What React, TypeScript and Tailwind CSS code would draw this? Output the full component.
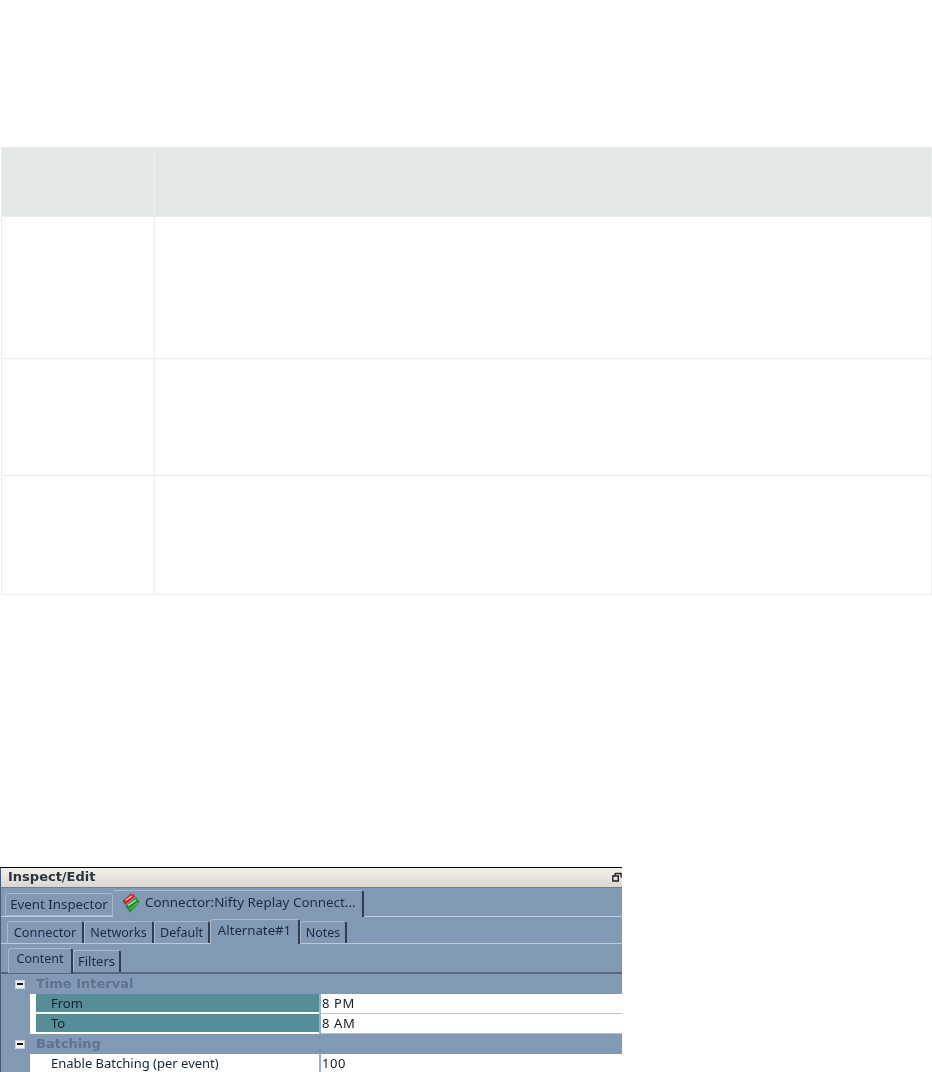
import React from "react";

const font = "font-['Noto_Sans',sans-serif]";

function Tab({ label, active, w, h, size, plain }: { label: string; active?: boolean; w: string; h: string; size: string; plain?: boolean }) {
  return (
    <div
      className={`${w} ${h} ${size} flex items-center justify-center text-[#1c2b44] rounded-t-[3px] border-l border-t border-[#a9b9cd] bg-[#8299b6] ${
        plain ? "border-r border-b" : "border-r-2 border-r-[#2f3e55]"
      } ${active ? "pb-[3px] relative -mb-px" : "pt-px"}`}
    >
      {label}
    </div>
  );
}

function Row({ label, value, sel }: { label: string; value: string; sel?: boolean }) {
  return (
    <div className="flex h-[20px] ml-[30px] bg-white">
      <div className="w-[6px]" />
      <div className="w-[283px]">
        <div className={`h-[18px] pl-[15px] text-[13px] leading-[18px] text-[#14242e] ${sel ? "bg-[#568e98]" : "bg-white"}`}>{label}</div>
      </div>
      <div className="w-[2px] bg-[#9fb0c4]" />
      <div className="flex-1 border-b border-[#b4c2d2] pl-px text-[13px] leading-[18px] text-[#1a1a1a] tracking-[0.6px]">{value}</div>
    </div>
  );
}

function Group({ label }: { label: string }) {
  return (
    <div className="flex items-center h-[20px] pl-[15px]">
      <div className="w-[10px] h-[9px] bg-[#eef1f5] border border-[#c8d2de] flex items-center justify-center">
        <div className="w-[6px] h-[2px] bg-[#111]" />
      </div>
      <span className="ml-[11px] font-['DejaVu_Sans',sans-serif] font-bold text-[13px] text-[#5f7391]">{label}</span>
    </div>
  );
}

export default function App() {
  return (
    <div className={`w-[932px] h-[1072px] overflow-hidden bg-white ${font}`}>
      <div className="pt-[147px] pl-px">
        <div className="w-[931px] border border-[#ebecec] grid grid-cols-[153px_1fr] grid-rows-[69px_142px_117px_118px]">
          <div className="bg-[#e3e7e7] border-r border-r-[#eef0f0] border-b border-b-[#ebecec]" />
          <div className="bg-[#e3e7e7] border-b border-b-[#ebecec]" />
          <div className="border-r border-[#ebecec] border-b" />
          <div className="border-b border-[#ebecec]" />
          <div className="border-r border-[#ebecec] border-b" />
          <div className="border-b border-[#ebecec]" />
          <div className="border-r border-[#ebecec]" />
          <div />
        </div>
      </div>

      <div className="mt-[272px] w-[622px] h-[205px] overflow-hidden border-t border-black border-l border-l-[#4a5a70] bg-[#8299b6] blur-[0.3px]">
        <div className="h-[20px] bg-gradient-to-b from-[#f3f0ec] to-[#dcd6cf] flex items-center justify-between pl-[7px] pb-[2px] border-b border-[#6d7f96]">
          <span className="font-['DejaVu_Sans',sans-serif] font-bold text-[13px] text-[#2c3444]">Inspect/Edit</span>
          <svg width="10" height="10" viewBox="0 0 10 10">
            <path d="M3 1.5h6v4M3 1.5v2M0.8 4h5.5v5H0.8z" fill="none" stroke="#222" strokeWidth="1.4" />
          </svg>
        </div>

        <div className="h-[29px] flex items-end pl-[4px] border-b border-[#bccbdc]">
          <Tab label="Event Inspector" w="w-[108px]" h="h-[23px]" size="text-[13.3px]" plain />
          <div className="w-[251px] h-[27px] relative -mb-px bg-[#8299b6] flex items-center pl-[9px] pb-[3px] text-[13.4px] text-[#1c2b44] border-t border-[#a9b9cd] border-r-2 border-r-[#2f3e55] rounded-t-[3px]">
            <svg width="18" height="20" viewBox="0 0 18 20" className="mr-[5px] shrink-0">
              <path d="M9 0.5 L13.5 3 L3 12 L0.5 8 Z" fill="#d42028" />
              <path d="M3.5 7.5 L10 2.8" stroke="#f5c9c0" strokeWidth="1.2" fill="none" />
              <path d="M14 4 L17.5 9 L8 19.5 L3 13 Z" fill="#1f9428" />
              <path d="M6 12.5 L14 7" stroke="#c4e8b0" strokeWidth="1.4" fill="none" />
              <path d="M8 16 L15.5 10" stroke="#7cc772" strokeWidth="1" fill="none" />
            </svg>
            Connector:Nifty Replay Connect...
          </div>
        </div>

        <div className="h-[27px] flex items-end pl-[6px] border-b border-[#bccbdc]">
          <Tab label="Connector" w="w-[77px]" h="h-[22px]" size="text-[12.8px]" />
          <Tab label="Networks" w="w-[70px]" h="h-[22px]" size="text-[12.5px]" />
          <Tab label="Default" w="w-[56px]" h="h-[22px]" size="text-[12.5px]" />
          <Tab label="Alternate#1" w="w-[90px]" h="h-[25px]" size="text-[13.2px]" active />
          <Tab label="Notes" w="w-[47px]" h="h-[22px]" size="text-[12.5px]" />
        </div>

        <div className="h-[30px] flex items-end pl-[7px] border-b-2 border-b-[#55687f]">
          <Tab label="Content" w="w-[65px]" h="h-[25px]" size="text-[12.5px]" active />
          <Tab label="Filters" w="w-[48px]" h="h-[22px]" size="text-[13px]" />
        </div>

        <div className="-ml-px">
          <Group label="Time Interval" />
          <Row label="From" value="8 PM" sel />
          <Row label="To" value="8 AM" sel />
          <Group label="Batching" />
          <Row label="Enable Batching (per event)" value="100" />
        </div>
      </div>
    </div>
  );
}
